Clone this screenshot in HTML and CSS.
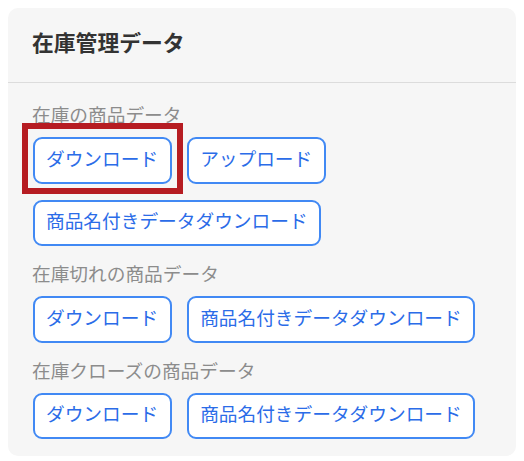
FILE: index.html
```html
<!DOCTYPE html>
<html lang="ja">
<head>
<meta charset="utf-8">
<link rel="stylesheet" href="styles.css">
</head>
<body>
<div class="card">
  <div class="card-header">
    <h2 class="title">在庫管理データ</h2>
  </div>
  <div class="card-body">
    <div class="group">
      <div class="label">在庫の商品データ</div>
      <div class="buttons">
        <button class="btn">ダウンロード</button>
        <button class="btn">アップロード</button>
        <button class="btn">商品名付きデータダウンロード</button>
      </div>
    </div>
    <div class="group">
      <div class="label">在庫切れの商品データ</div>
      <div class="buttons">
        <button class="btn">ダウンロード</button>
        <button class="btn">商品名付きデータダウンロード</button>
      </div>
    </div>
    <div class="group">
      <div class="label">在庫クローズの商品データ</div>
      <div class="buttons">
        <button class="btn">ダウンロード</button>
        <button class="btn">商品名付きデータダウンロード</button>
      </div>
    </div>
  </div>
  <div class="highlight"></div>
</div>
</body>
</html>
```

FILE: styles.css
```css
* { box-sizing: border-box; }
html, body { background: #ffffff; }
body {
  margin: 8px;
  font-family: "Noto Sans CJK JP", "Noto Sans", sans-serif;
}
.card {
  position: relative;
  background: #f6f6f6;
  border-radius: 10px;
  height: 448px;
}
.card-header {
  padding: 21px 24px 27px;
  border-bottom: 1px solid #dcdcdc;
}
.title {
  margin: 0;
  font-size: 21.8px;
  line-height: 26px;
  font-weight: 700;
  color: #333333;
}
.card-body {
  padding: 17px 24px 0;
  display: flex;
  flex-direction: column;
  gap: 13px;
}
.label {
  font-size: 18.7px;
  line-height: 28px;
  color: #8c8c8c;
  margin-bottom: 9px;
}
.buttons {
  display: flex;
  flex-wrap: wrap;
  gap: 16px 15px;
  padding-left: 0.5px;
}
.btn {
  font-family: inherit;
  font-size: 18.7px;
  line-height: 28px;
  padding: 4.5px 11.5px 10px;
  border: 2px solid #4189f4;
  border-radius: 9px;
  background: #ffffff;
  color: #2b6ce8;
  cursor: pointer;
}
.highlight {
  position: absolute;
  left: 14px;
  top: 115px;
  width: 161px;
  height: 71px;
  border: 6px solid #b61c22;
  pointer-events: none;
}
```
